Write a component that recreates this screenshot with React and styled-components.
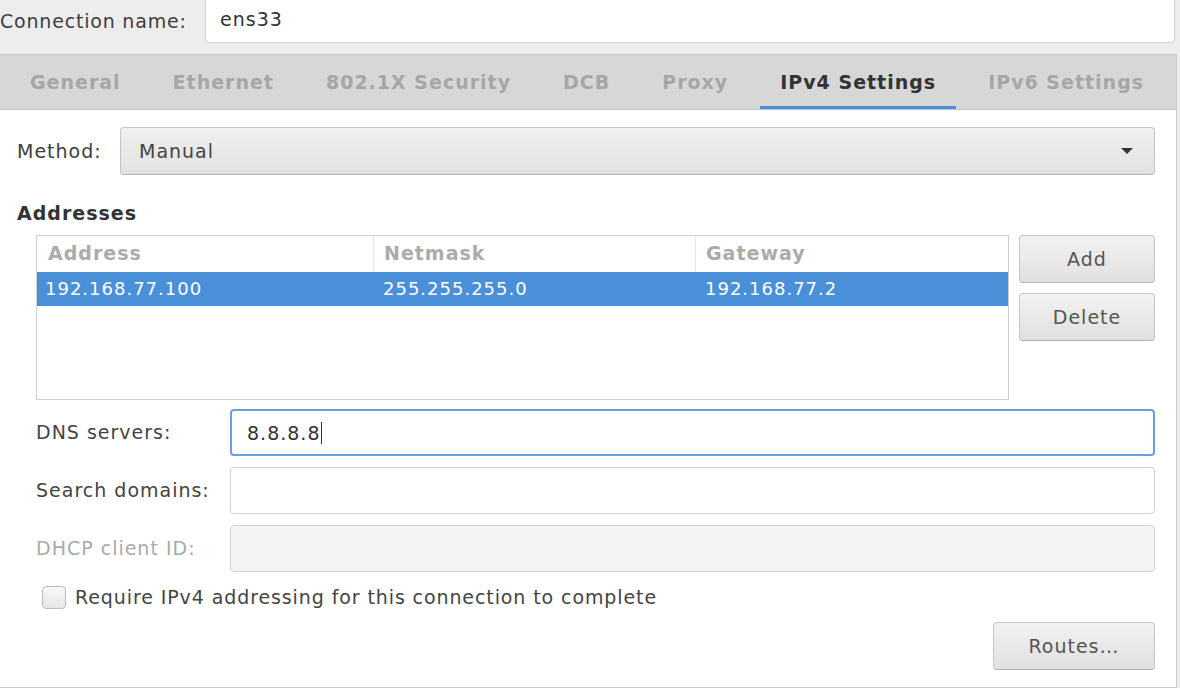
import React from 'react';
import styled, { createGlobalStyle } from 'styled-components';

const GlobalStyle = createGlobalStyle`
    html, body {
        margin: 0;
        padding: 0;
        background: #ededed;
    }
    * {
        box-sizing: border-box;
    }
`;

const Window = styled.div`
    width: 1180px;
    height: 688px;
    overflow: hidden;
    background: #ededed;
    font-family: 'DejaVu Sans', Verdana, sans-serif;
    font-size: 19px;
    letter-spacing: 1px;
    color: #3e3e3e;
`;

const TopRow = styled.div`
    display: flex;
    align-items: center;
    height: 60px;
    margin-top: -6px;
    padding-bottom: 11px;
    padding-right: 5px;
`;

const TopLabel = styled.div`
    width: 205px;
    padding-top: 4px;
    letter-spacing: 0.8px;
`;

const Entry = styled.div`
    flex: 1;
    display: flex;
    align-items: center;
    height: ${p => p.$h || 47}px;
    padding-left: ${p => p.$pad || 16}px;
    background: ${p => (p.$disabled ? '#f4f4f4' : '#ffffff')};
    border: ${p => (p.$focused ? '2px solid #6a9fdf' : '1px solid #d2d2d2')};
    border-radius: 4px;
    color: #333;
`;

const Caret = styled.span`
    display: inline-block;
    width: 1px;
    height: 22px;
    background: #333;
    margin-left: 1px;
`;

const Panel = styled.div`
    width: 1177px;
    height: 634px;
    background: #ffffff;
    border-right: 1px solid #cbcbcb;
    border-bottom: 1px solid #cbcbcb;
    display: flex;
    flex-direction: column;
`;

const TabBar = styled.div`
    display: flex;
    align-items: stretch;
    gap: 12px;
    height: 56px;
    padding-left: 10px;
    background: #d7d7d7;
    border-top: 1px solid #c6c6c6;
    border-bottom: 1px solid #c6c6c6;
`;

const Tab = styled.div`
    display: flex;
    align-items: center;
    padding: 3px 20px 0;
    font-weight: bold;
    color: ${p => (p.$active ? '#333333' : '#a6a6a6')};
    border-bottom: 3px solid ${p => (p.$active ? '#4a90d9' : 'transparent')};
`;

const Content = styled.div`
    display: flex;
    flex-direction: column;
    padding: 0 21px 0 17px;
`;

const MethodRow = styled.div`
    display: flex;
    align-items: center;
    margin-top: 17px;
`;

const MethodLabel = styled.div`
    width: 103px;
`;

const Combo = styled.div`
    flex: 1;
    display: flex;
    align-items: center;
    justify-content: space-between;
    height: 48px;
    padding: 0 20px 0 18px;
    background: linear-gradient(#f0f0f0, #e2e2e2);
    border: 1px solid #c4c4c4;
    border-bottom-color: #b4b4b4;
    border-radius: 4px;
    color: #444;
`;

const Heading = styled.div`
    margin-top: 26px;
    font-weight: bold;
    line-height: 24px;
    color: #333;
`;

const AddressArea = styled.div`
    display: flex;
    gap: 10px;
    margin-top: 10px;
    margin-left: 19px;
`;

const Table = styled.div`
    flex: 1;
    height: 165px;
    border: 1px solid #d0d0d0;
    background: #fff;
`;

const Row = styled.div`
    display: grid;
    grid-template-columns: 336px 322px 1fr;
    height: ${p => (p.$header ? 36 : 34)}px;
    background: ${p => (p.$selected ? '#4a90d9' : 'transparent')};
    color: ${p => (p.$selected ? '#ffffff' : '#ababab')};
    font-weight: ${p => (p.$header ? 'bold' : 'normal')};
    font-size: ${p => (p.$header ? 19 : 18)}px;
`;

const Cell = styled.div`
    display: flex;
    align-items: center;
    padding-left: ${p => p.$pad || 11}px;
    border-left: ${p => (p.$sep ? '1px solid #e6e6e6' : 'none')};
    padding-bottom: ${p => (p.$header ? 3 : 2)}px;
`;

const ButtonColumn = styled.div`
    display: flex;
    flex-direction: column;
    gap: 10px;
    width: 136px;
`;

const Button = styled.div`
    display: flex;
    align-items: center;
    justify-content: center;
    width: ${p => p.$w || 136}px;
    height: ${p => p.$h || 48}px;
    background: linear-gradient(#f2f2f2, #e0e0e0);
    border: 1px solid #c6c6c6;
    border-bottom-color: #b2b2b2;
    border-radius: 4px;
    color: #555;
`;

const Form = styled.div`
    display: grid;
    grid-template-columns: 194px 1fr;
    row-gap: 11px;
    align-items: center;
    margin-top: 9px;
    margin-left: 19px;
`;

const FieldLabel = styled.div`
    color: ${p => (p.$disabled ? '#aaaaaa' : '#444')};
    padding-bottom: 2px;
`;

const CheckRow = styled.div`
    display: flex;
    align-items: center;
    gap: 9px;
    margin-top: 13px;
    margin-left: 25px;
    height: 24px;
    color: #444;
    letter-spacing: 0.9px;
`;

const CheckBox = styled.div`
    width: 24px;
    height: 23px;
    border: 1px solid #bdbdbd;
    border-radius: 4px;
    background: linear-gradient(#f8f8f8, #e6e6e6);
`;

const Footer = styled.div`
    display: flex;
    justify-content: flex-end;
    margin-top: 13px;
`;

const Arrow = () => (
    <svg width="14" height="8" viewBox="0 0 14 8">
        <path d="M1 1 L13 1 L7 7 Z" fill="#333" />
    </svg>
);

const tabs = ['General', 'Ethernet', '802.1X Security', 'DCB', 'Proxy', 'IPv4 Settings', 'IPv6 Settings'];

export default function App() {
    return (
        <Window>
            <GlobalStyle />
            <TopRow>
                <TopLabel>Connection name:</TopLabel>
                <Entry $h={49} $pad={14}>ens33</Entry>
            </TopRow>

            <Panel>
                <TabBar>
                    {tabs.map(t => (
                        <Tab key={t} $active={t === 'IPv4 Settings'}>{t}</Tab>
                    ))}
                </TabBar>

                <Content>
                    <MethodRow>
                        <MethodLabel>Method:</MethodLabel>
                        <Combo>
                            <span>Manual</span>
                            <Arrow />
                        </Combo>
                    </MethodRow>

                    <Heading>Addresses</Heading>

                    <AddressArea>
                        <Table>
                            <Row $header>
                                <Cell $header>Address</Cell>
                                <Cell $header $sep $pad={10}>Netmask</Cell>
                                <Cell $header $sep $pad={10}>Gateway</Cell>
                            </Row>
                            <Row $selected>
                                <Cell $pad={8}>192.168.77.100</Cell>
                                <Cell $pad={10}>255.255.255.0</Cell>
                                <Cell $pad={10}>192.168.77.2</Cell>
                            </Row>
                        </Table>
                        <ButtonColumn>
                            <Button>Add</Button>
                            <Button>Delete</Button>
                        </ButtonColumn>
                    </AddressArea>

                    <Form>
                        <FieldLabel>DNS servers:</FieldLabel>
                        <Entry $focused $pad={15}>8.8.8.8<Caret /></Entry>
                        <FieldLabel>Search domains:</FieldLabel>
                        <Entry />
                        <FieldLabel $disabled>DHCP client ID:</FieldLabel>
                        <Entry $disabled />
                    </Form>

                    <CheckRow>
                        <CheckBox />
                        <span>Require IPv4 addressing for this connection to complete</span>
                    </CheckRow>

                    <Footer>
                        <Button $w={162} $h={48}>Routes…</Button>
                    </Footer>
                </Content>
            </Panel>
        </Window>
    );
}
